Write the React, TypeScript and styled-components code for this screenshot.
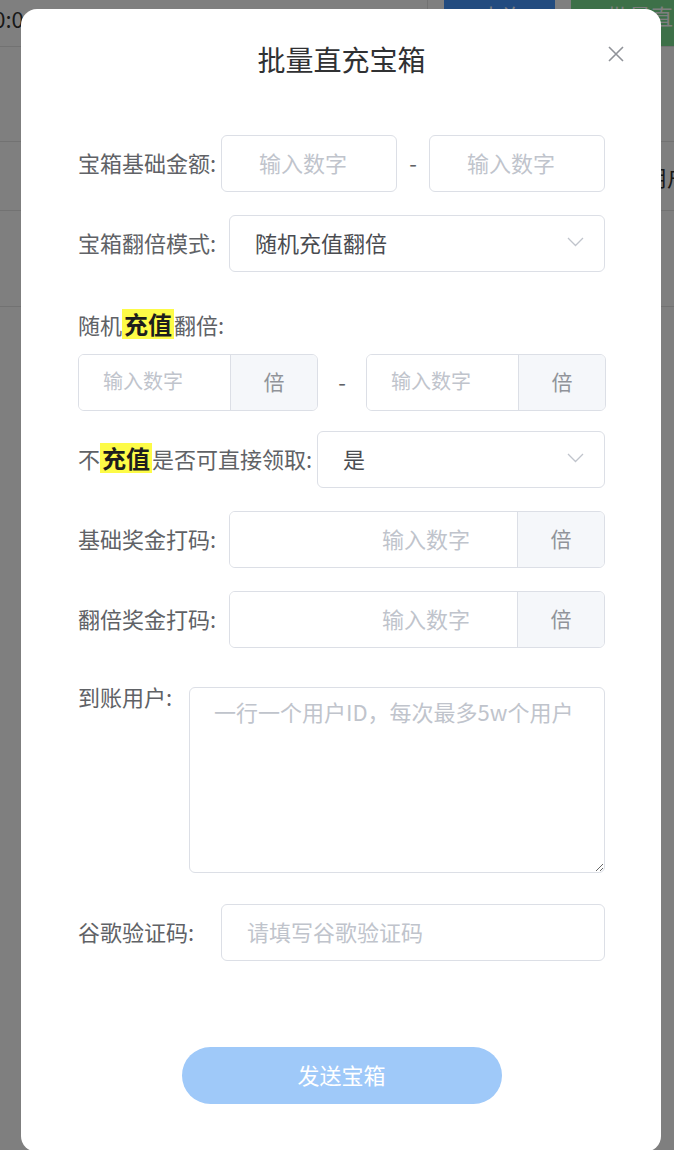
import React from 'react';
import styled, { createGlobalStyle } from 'styled-components';

const GlobalStyle = createGlobalStyle`
  html, body {
    margin: 0;
    padding: 0;
    height: 1150px;
    overflow: hidden;
    font-family: "Noto Sans CJK SC", "Noto Sans", "Liberation Sans", sans-serif;
  }
  * { box-sizing: border-box; }
`;

/* page behind the dialog */

const Page = styled.div`
  height: 1150px;
  background: #fff;
  overflow: hidden;
`;

const TopBar = styled.div`
  height: 47px;
  display: flex;
  align-items: flex-start;
  border-bottom: 1px solid #e4e4e4;
`;

const TimeCell = styled.div`
  width: 428px;
  height: 46px;
  flex-shrink: 0;
  border-right: 1px solid #e4e4e4;
  font-size: 22px;
  line-height: 36px;
  color: #333;
  white-space: nowrap;
  overflow: hidden;
  text-indent: -19px;
`;

const BgButton = styled.div<{ $bg: string; $w: number; $h: number }>`
  width: ${(p) => p.$w}px;
  height: ${(p) => p.$h}px;
  flex-shrink: 0;
  margin-left: 16px;
  background: ${(p) => p.$bg};
  color: #fff;
  font-size: 22px;
  line-height: 30px;
  padding-left: 36px;
  white-space: nowrap;
  overflow: hidden;
`;

const BgRow = styled.div<{ $h: number }>`
  height: ${(p) => p.$h}px;
  border-bottom: 1px solid #e4e4e4;
  display: flex;
  align-items: center;
  padding-left: 645px;
  font-size: 22px;
  color: #333;
  white-space: nowrap;
`;

/* dialog */

const Overlay = styled.div`
  position: fixed;
  inset: 0;
  background: rgba(0, 0, 0, 0.5);
  display: flex;
  justify-content: center;
  align-items: flex-start;
  padding-top: 9px;
`;

const Dialog = styled.div`
  position: relative;
  width: 640px;
  height: 1143px;
  margin-left: 8px;
  background: #fff;
  border-radius: 16px;
  padding: 30px 56px 0 57px;
`;

const Title = styled.h2`
  margin: 0 0 56px;
  text-align: center;
  font-size: 28px;
  line-height: 40px;
  font-weight: 400;
  color: #303133;
`;

const CloseButton = styled.button`
  position: absolute;
  top: 37px;
  right: 37px;
  width: 16px;
  height: 16px;
  padding: 0;
  border: 0;
  background: none;
  cursor: pointer;
  display: flex;
`;

const FormRow = styled.div<{ $mb: number; $top?: boolean }>`
  display: flex;
  align-items: ${(p) => (p.$top ? 'flex-start' : 'center')};
  margin-bottom: ${(p) => p.$mb}px;
`;

const Label = styled.label<{ $w?: number; $lh?: number }>`
  flex-shrink: 0;
  width: ${(p) => (p.$w ? `${p.$w}px` : 'auto')};
  font-size: 22px;
  line-height: ${(p) => p.$lh ?? 30}px;
  color: #606266;
  white-space: nowrap;
  margin-top: -3px;
`;

const Mark = styled.b`
  display: inline-block;
  padding: 0 2px;
  background: #fdfb47;
  color: #1d1d1d;
  font-size: 24px;
  line-height: 30px;
  font-weight: 700;
  vertical-align: top;
`;

const TextInput = styled.input<{ $w?: number; $pl: number }>`
  width: ${(p) => (p.$w ? `${p.$w}px` : 'auto')};
  flex: ${(p) => (p.$w ? '0 0 auto' : '1 1 0')};
  min-width: 0;
  height: 57px;
  border: 1px solid #dcdfe6;
  border-radius: 6px;
  padding: 0 16px 4px ${(p) => p.$pl}px;
  font-family: inherit;
  font-size: 22px;
  color: #606266;
  outline: none;
  &::placeholder { color: #c0c4cc; }
`;

const Dash = styled.span<{ $w: number }>`
  width: ${(p) => p.$w}px;
  flex-shrink: 0;
  text-align: center;
  font-size: 22px;
  color: #606266;
  margin-top: -3px;
`;

const Select = styled.div`
  flex: 1;
  height: 57px;
  border: 1px solid #dcdfe6;
  border-radius: 6px;
  display: flex;
  align-items: center;
  justify-content: space-between;
  padding: 0 20px 4px 25px;
  font-size: 22px;
  color: #4a4c51;
`;

const Group = styled.div<{ $w?: number }>`
  width: ${(p) => (p.$w ? `${p.$w}px` : 'auto')};
  flex: ${(p) => (p.$w ? '0 0 auto' : '1 1 0')};
  height: 57px;
  display: flex;
  border: 1px solid #dcdfe6;
  border-radius: 6px;
  overflow: hidden;
`;

const GroupInput = styled.input<{ $right?: boolean; $fs: number }>`
  flex: 1;
  min-width: 0;
  border: 0;
  outline: none;
  font-family: inherit;
  font-size: ${(p) => p.$fs}px;
  color: #606266;
  text-align: ${(p) => (p.$right ? 'right' : 'left')};
  padding: ${(p) => (p.$right ? '0 47px 4px 16px' : '0 16px 4px 24px')};
  &::placeholder { color: #c0c4cc; }
`;

const Append = styled.span`
  width: 87px;
  flex-shrink: 0;
  background: #f5f7fa;
  border-left: 1px solid #dcdfe6;
  display: flex;
  align-items: center;
  justify-content: center;
  padding-bottom: 4px;
  font-size: 21px;
  color: #909399;
`;

const TextArea = styled.textarea`
  flex: 1;
  height: 186px;
  border: 1px solid #dcdfe6;
  border-radius: 6px;
  padding: 8px 20px 10px 24px;
  font-family: inherit;
  font-size: 22px;
  line-height: 30px;
  color: #606266;
  resize: vertical;
  outline: none;
  &::placeholder { color: #c0c4cc; }
`;

const Submit = styled.button`
  display: block;
  width: 320px;
  height: 57px;
  margin: 86px auto 0;
  padding: 0 0 4px;
  border: 0;
  border-radius: 29px;
  background: #9fc9f9;
  color: #fff;
  font-family: inherit;
  font-size: 22px;
  cursor: not-allowed;
`;

const Chevron = () => (
  <svg width="17" height="10" viewBox="0 0 17 10" fill="none">
    <polyline points="1,1 8.5,8.5 16,1" stroke="#c0c4cc" strokeWidth="1.3" />
  </svg>
);

const CloseIcon = () => (
  <svg width="16" height="16" viewBox="0 0 16 16" fill="none">
    <path d="M1 1 L15 15 M15 1 L1 15" stroke="#909399" strokeWidth="1.6" />
  </svg>
);

export default function App() {
  return (
    <>
      <GlobalStyle />
      <Page>
        <TopBar>
          <TimeCell>00:00:00</TimeCell>
          <BgButton $bg="#4496ff" $w={111} $h={36}>查询</BgButton>
          <BgButton $bg="#7ae090" $w={150} $h={46}>批量直充</BgButton>
        </TopBar>
        <BgRow $h={95} />
        <BgRow $h={69}>用户</BgRow>
        <BgRow $h={96} />
      </Page>

      <Overlay>
        <Dialog>
          <Title>批量直充宝箱</Title>
          <CloseButton aria-label="关闭">
            <CloseIcon />
          </CloseButton>

          <FormRow $mb={23}>
            <Label $w={143}>宝箱基础金额:</Label>
            <TextInput $w={176} $pl={37} placeholder="输入数字" />
            <Dash $w={32}>-</Dash>
            <TextInput $w={176} $pl={37} placeholder="输入数字" />
          </FormRow>

          <FormRow $mb={40}>
            <Label $w={151}>宝箱翻倍模式:</Label>
            <Select>
              <span>随机充值翻倍</span>
              <Chevron />
            </Select>
          </FormRow>

          <FormRow $mb={15}>
            <Label>随机<Mark>充值</Mark>翻倍:</Label>
          </FormRow>
          <FormRow $mb={20}>
            <Group $w={240}>
              <GroupInput $fs={20} placeholder="输入数字" />
              <Append>倍</Append>
            </Group>
            <Dash $w={48}>-</Dash>
            <Group $w={240}>
              <GroupInput $fs={20} placeholder="输入数字" />
              <Append>倍</Append>
            </Group>
          </FormRow>

          <FormRow $mb={23}>
            <Label $w={239}>不<Mark>充值</Mark>是否可直接领取:</Label>
            <Select>
              <span>是</span>
              <Chevron />
            </Select>
          </FormRow>

          <FormRow $mb={23}>
            <Label $w={151}>基础奖金打码:</Label>
            <Group>
              <GroupInput $fs={22} $right placeholder="输入数字" />
              <Append>倍</Append>
            </Group>
          </FormRow>

          <FormRow $mb={39}>
            <Label $w={151}>翻倍奖金打码:</Label>
            <Group>
              <GroupInput $fs={22} $right placeholder="输入数字" />
              <Append>倍</Append>
            </Group>
          </FormRow>

          <FormRow $mb={31} $top>
            <Label $w={111} $lh={24}>到账用户:</Label>
            <TextArea placeholder="一行一个用户ID，每次最多5w个用户" />
          </FormRow>

          <FormRow $mb={0}>
            <Label $w={143}>谷歌验证码:</Label>
            <TextInput $pl={25} placeholder="请填写谷歌验证码" />
          </FormRow>

          <Submit disabled>发送宝箱</Submit>
        </Dialog>
      </Overlay>
    </>
  );
}
